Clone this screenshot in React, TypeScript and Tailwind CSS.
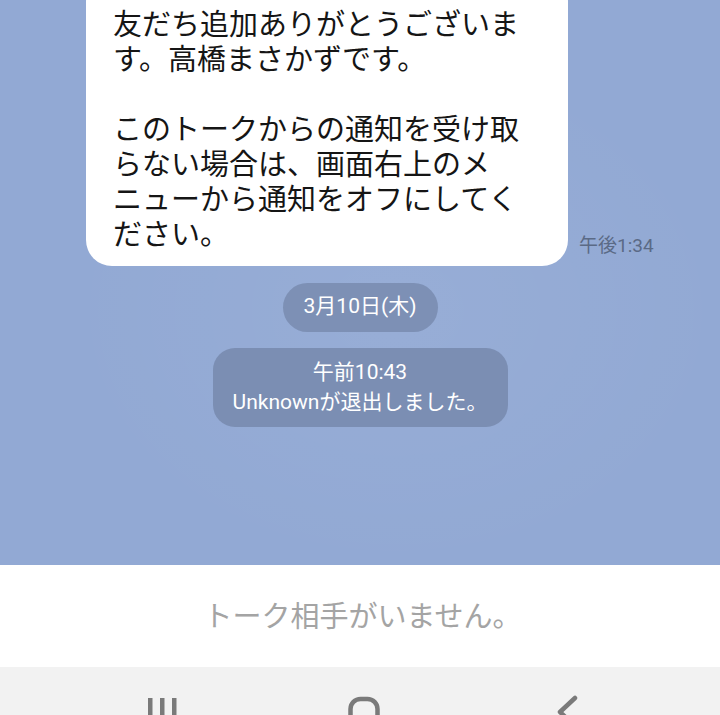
import React from "react";

const bubbleLines = [
  "友だち追加ありがとうございま",
  "す。高橋まさかずです。",
  "",
  "このトークからの通知を受け取",
  "らない場合は、画面右上のメ",
  "ニューから通知をオフにしてく",
  "ださい。",
];

function NavIcons() {
  return (
    <div className="flex h-[48px] gap-[142px] bg-[#f2f2f2] pl-[132px]">
      {/* recents */}
      <svg width="60" height="48" viewBox="0 0 60 48">
        <rect x="16" y="31" width="4.5" height="30" fill="#7a7a7a" />
        <rect x="28" y="31" width="4.5" height="30" fill="#7a7a7a" />
        <rect x="40" y="31" width="4.5" height="30" fill="#7a7a7a" />
      </svg>
      {/* home */}
      <svg width="60" height="48" viewBox="0 0 60 48">
        <rect x="16.5" y="32" width="27" height="30" rx="10" fill="none" stroke="#7a7a7a" strokeWidth="4.5" />
      </svg>
      {/* back */}
      <svg width="60" height="48" viewBox="0 0 60 48">
        <polyline points="39,31 24,45 39,59" fill="none" stroke="#7a7a7a" strokeWidth="4.5" strokeLinecap="round" strokeLinejoin="round" />
      </svg>
    </div>
  );
}

export default function App() {
  return (
    <div className="h-[715px] w-[720px] overflow-hidden bg-white font-['Noto_Sans_CJK_JP',sans-serif]">
      {/* chat area */}
      <div className="relative h-[565px] overflow-hidden bg-[#92a9d4] bg-[radial-gradient(ellipse_at_55%_55%,rgba(255,255,255,0.05),rgba(255,255,255,0)_60%)]">
        <div className="flex items-end pl-[86px]">
          <div className="-mt-[24px] w-[482px] rounded-[26px] bg-white pb-[16px] pl-[27px] pt-[28.5px] text-[29px] leading-[35px] text-[#151515]">
            {bubbleLines.map((line, i) => (
              <div key={i} className="h-[35px] whitespace-nowrap">
                {line}
              </div>
            ))}
          </div>
          <span className="mb-[10px] ml-[11px] font-['Roboto','Noto_Sans_CJK_JP',sans-serif] text-[19px] leading-[20px] text-[#5b6a86]">
            午後1:34
          </span>
        </div>

        <div className="mt-[17px] flex justify-center">
          <div className="flex h-[49px] w-[155px] items-center justify-center rounded-full bg-[#7d90b5] font-['Roboto','Noto_Sans_CJK_JP',sans-serif] text-[21px] text-white">
            3月10日(木)
          </div>
        </div>

        <div className="mt-[16px] flex justify-center">
          <div className="flex h-[79px] w-[295px] flex-col items-center justify-center rounded-[22px] bg-[#7b8eb3] font-['Roboto','Noto_Sans_CJK_JP',sans-serif] text-[21px] leading-[30px] text-white">
            <span>午前10:43</span>
            <span>Unknownが退出しました。</span>
          </div>
        </div>
      </div>

      {/* footer */}
      <div className="flex h-[102px] items-center justify-center bg-white pb-[2px] pl-[5px] text-[29px] text-[#a4a4a4]">
        トーク相手がいません。
      </div>

      <NavIcons />
    </div>
  );
}
